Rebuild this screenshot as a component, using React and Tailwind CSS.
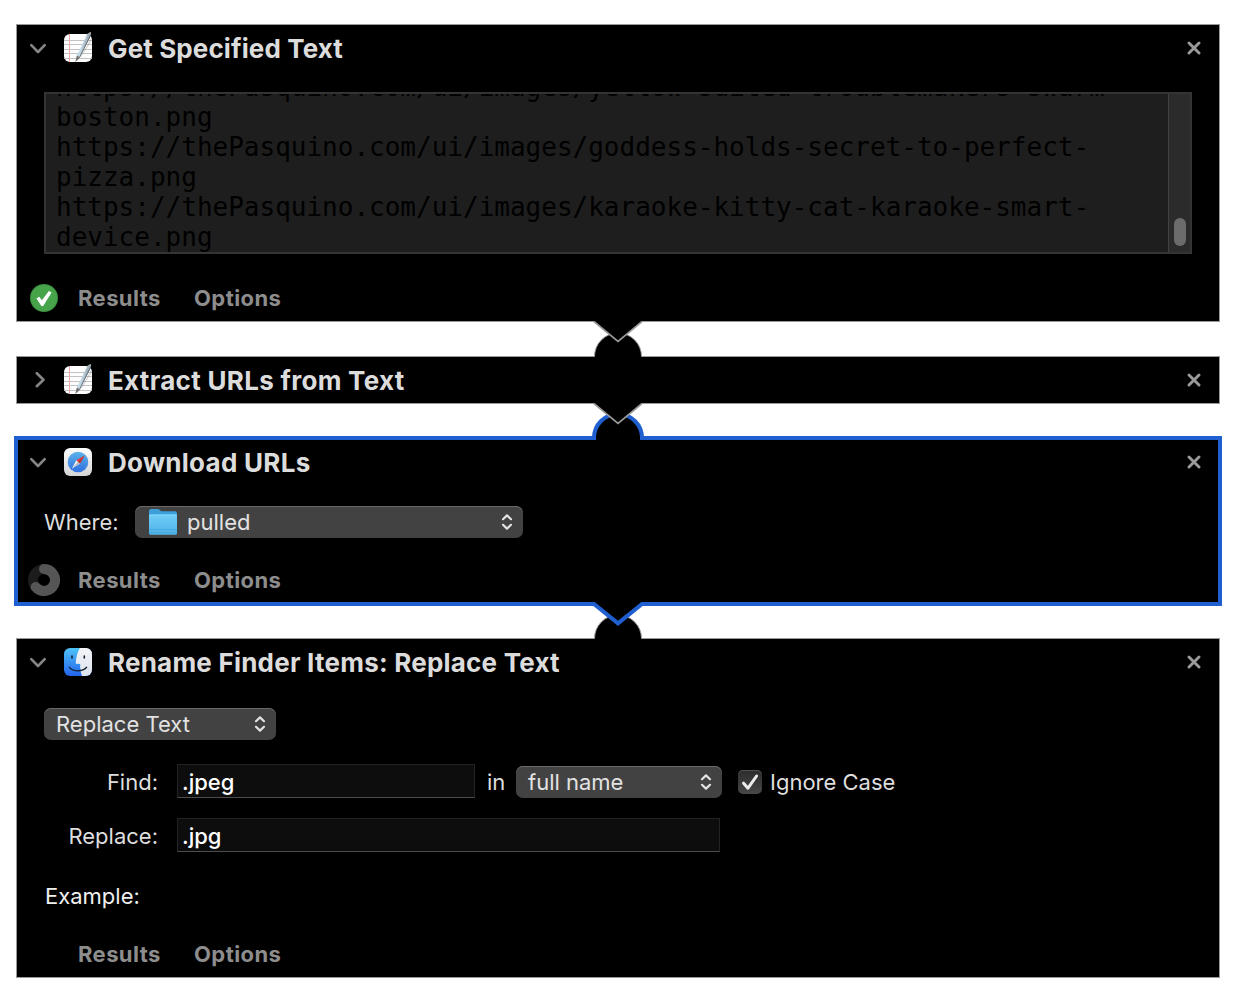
import React from 'react';

function ChevronDown() {
  return (
    <svg className="h-4 w-4 shrink-0" viewBox="0 0 16 16" fill="none" stroke="#868686" strokeWidth="2.6" strokeLinecap="round" strokeLinejoin="round">
      <path d="M1.3 5.2 L8 12 L14.7 5.2" />
    </svg>
  );
}

function ChevronRight() {
  return (
    <svg className="h-4 w-4 shrink-0" viewBox="0 0 16 16" fill="none" stroke="#868686" strokeWidth="2.6" strokeLinecap="round" strokeLinejoin="round">
      <path d="M6.8 1.2 L13.5 7.7 L6.8 14.2" />
    </svg>
  );
}

function CloseIcon() {
  return (
    <svg className="h-[14px] w-[14px]" viewBox="0 0 14 14" fill="none" stroke="#9a9a9a" strokeWidth="2.9" strokeLinecap="round">
      <path d="M2 2 L12 12 M12 2 L2 12" />
    </svg>
  );
}

function TextEditIcon() {
  return (
    <svg className="h-7 w-7 shrink-0 overflow-visible" viewBox="0 0 28 28">
      <defs>
        <linearGradient id="penBody" x1="0" y1="0" x2="1" y2="0.5">
          <stop offset="0" stopColor="#4f7fa6" />
          <stop offset="0.45" stopColor="#c9dfee" />
          <stop offset="1" stopColor="#6d7880" />
        </linearGradient>
      </defs>
      <rect width="28" height="28" rx="6" fill="#fdfdfd" />
      <path d="M0 6.5H28M0 10.5H28M0 15.5H28M0 19.5H28M0 24.5H28" stroke="#c3c3c3" strokeWidth="1" />
      <path d="M5.5 0V28" stroke="#f0a9a9" strokeWidth="1" />
      <path d="M15 25 L27.5 3 L27.5 7 L18 22 Z" fill="#000" opacity="0.12" />
      <path d="M23.6 -0.6 L27 -2 L26.8 1.8 L15.8 23 L12.6 27 L12.8 21.8 Z" fill="url(#penBody)" />
      <path d="M26.8 0.8 L15.7 23 L12.8 26.5" stroke="#56595c" strokeWidth="0.8" fill="none" />
      <path d="M12.8 21.8 L15.6 23 L11.2 28.6 Z" fill="#77726d" />
      <path d="M24 -0.8 L27 -2 L26.8 0.6 Z" fill="#a9a29a" />
    </svg>
  );
}

function SafariIcon() {
  return (
    <svg className="h-7 w-7 shrink-0" viewBox="0 0 28 28">
      <defs>
        <linearGradient id="safariTile" x1="0" y1="0" x2="0" y2="1">
          <stop offset="0" stopColor="#ffffff" />
          <stop offset="1" stopColor="#d4d4d6" />
        </linearGradient>
        <linearGradient id="safariDial" x1="0" y1="0" x2="0" y2="1">
          <stop offset="0" stopColor="#5cb3ea" />
          <stop offset="1" stopColor="#2d6fe0" />
        </linearGradient>
      </defs>
      <rect width="28" height="28" rx="6.2" fill="url(#safariTile)" />
      <circle cx="14" cy="14" r="10.3" fill="url(#safariDial)" />
      <circle cx="14" cy="14" r="8.9" fill="none" stroke="#9dcbf5" strokeWidth="0.9" strokeDasharray="0.5 0.9" opacity="0.4" />
      <path d="M20.6 7.6 L12.2 12.2 L15.8 15.8 Z" fill="#e8453c" />
      <path d="M20.6 7.6 L14 14 L15.8 15.8 Z" fill="#b5302f" />
      <path d="M8 20.4 L12.2 12.2 L15.8 15.8 Z" fill="#f3f3f5" />
      <path d="M8 20.4 L14 14 L15.8 15.8 Z" fill="#b4bac4" />
    </svg>
  );
}

function FinderIcon() {
  return (
    <svg className="h-7 w-7 shrink-0" viewBox="0 0 28 28">
      <defs>
        <linearGradient id="finderLeft" x1="0" y1="0" x2="0" y2="1">
          <stop offset="0" stopColor="#4fc3f7" />
          <stop offset="1" stopColor="#2363ee" />
        </linearGradient>
        <linearGradient id="finderRight" x1="0" y1="0" x2="0" y2="1">
          <stop offset="0" stopColor="#f4f4f6" />
          <stop offset="1" stopColor="#dbe3f0" />
        </linearGradient>
        <clipPath id="finderTile">
          <rect width="28" height="28" rx="6.2" />
        </clipPath>
      </defs>
      <g clipPath="url(#finderTile)">
        <rect width="28" height="28" fill="url(#finderLeft)" />
        <path d="M16 0 C13.4 4 11.9 9.5 11.8 15.8 L16.2 16 C15.9 20 16.6 24.5 18 28 L28 28 L28 0 Z" fill="url(#finderRight)" />
      </g>
      <path d="M5.4 19.3 C9.4 24 18.5 24 22.6 19.3" stroke="#14202e" strokeWidth="1.3" fill="none" strokeLinecap="round" />
      <path d="M8 8 V10 M20.3 8 V10" stroke="#14202e" strokeWidth="1.6" strokeLinecap="round" />
    </svg>
  );
}

function FolderIcon() {
  return (
    <svg className="h-7 w-[30px] shrink-0" viewBox="0 0 30 28">
      <defs>
        <linearGradient id="folderFront" x1="0" y1="0" x2="0" y2="1">
          <stop offset="0" stopColor="#72cdf8" />
          <stop offset="1" stopColor="#4fb2e8" />
        </linearGradient>
      </defs>
      <path d="M1 3 Q1 1 3 1 H9.5 Q10.6 1 11.5 1.8 L12.5 2.7 Q13.2 3.3 14.4 3.3 H27 Q29 3.3 29 5.2 V24 H1 Z" fill="#3d9fd8" />
      <path d="M1 6.9 Q1 6.5 2 6.5 H28 Q29 6.5 29 6.9 V25.2 Q29 26.8 27.4 26.8 H2.6 Q1 26.8 1 25.2 Z" fill="url(#folderFront)" />
      <path d="M1.5 6.9 H28.5" stroke="#93dcfb" strokeWidth="0.7" />
      <path d="M1 21.6 H29 M1 24.6 H29" stroke="#3d9cd2" strokeWidth="0.6" />
    </svg>
  );
}

function SuccessIcon() {
  return (
    <svg className="h-7 w-7" viewBox="0 0 28 28">
      <circle cx="14" cy="14" r="14" fill="#3c8f3f" />
      <circle cx="14" cy="14" r="13" fill="#48a44b" />
      <path d="M6.4 14.4 L9.2 12.8 L12 16.2 L18.8 7 L21.6 8.4 L13.2 22 L11.4 22 Z" fill="#fff" />
    </svg>
  );
}

function ProgressIcon() {
  return (
    <svg className="h-8 w-8" viewBox="0 0 32 32" fill="none">
      <circle cx="16" cy="16" r="11" stroke="#1c1c1c" strokeWidth="10" />
      <path d="M16 5 A11 11 0 1 1 7.6 23.1" stroke="#555555" strokeWidth="10" strokeLinecap="round" />
    </svg>
  );
}

/* Semicircular socket that receives the arrow of the step above. */
function Socket({ active }) {
  return active ? (
    <svg className="absolute -top-[32px] left-[572px] h-[32px] w-[56px]" viewBox="0 0 56 32">
      <path d="M4 32 V30 A24 24 0 0 1 52 30 V32" fill="#000" stroke="#1f5fcf" strokeWidth="4" />
      <path d="M6 28 H50 V32 H6 Z" fill="#000" />
    </svg>
  ) : (
    <svg className="absolute -top-[27px] left-[573px] h-[27px] w-[56px]" viewBox="0 0 56 27">
      <path d="M4.5 28 V26.5 A23.5 23.5 0 0 1 51.5 26.5 V28" fill="#000" stroke="#999" strokeWidth="1" />
    </svg>
  );
}

/* Arrow pointing into the step below. */
function Arrow({ active }) {
  return active ? (
    <svg className="absolute -bottom-[30px] left-[572px] z-10 h-[30px] w-[56px]" viewBox="0 0 56 30">
      <path d="M4 0 H52 V2 L28 21.4 L4 2 Z" fill="#000" />
      <path d="M2 2 H4 L28 21.4 L52 2 H54" fill="none" stroke="#1f5fcf" strokeWidth="4" />
    </svg>
  ) : (
    <svg className="absolute -bottom-[25px] left-[573px] z-10 h-[25px] w-[56px]" viewBox="0 0 56 25">
      <path d="M4 0 V0.5 L28 20.4 L52 0.5 V0 Z" fill="#000" />
      <path d="M4 0.5 L28 20.4 L52 0.5" fill="none" stroke="#999" strokeWidth="1.7" />
    </svg>
  );
}

function Step({ title, titleClass, icon, className, active, collapsed, first, last, children }) {
  return (
    <section className={(active ? '-mx-[2px] border-4 border-[#1f5fcf] ' : 'border border-[#999] ') + 'relative bg-black ' + className}>
      {!first && <Socket active={active} />}
      <header className={active ? 'flex h-[44px] items-center pr-[17px] pl-3' : 'flex h-[46px] items-center pr-[18px] pl-[13px]'}>
        {collapsed ? <ChevronRight /> : <ChevronDown />}
        <div className="ml-[18px]">{icon}</div>
        <h2 className={'ml-4 flex-1 pt-px text-[26px] leading-8 font-bold whitespace-nowrap text-[#dcdcdc] ' + titleClass}>{title}</h2>
        <button aria-label="Remove step"><CloseIcon /></button>
      </header>
      {children}
      {!last && <Arrow active={active} />}
    </section>
  );
}

function Footer({ status, className }) {
  return (
    <footer className={'flex h-8 items-center text-[22px] font-bold tracking-[0.42px] text-[#8d8d8d] ' + className}>
      <div className="flex w-8 justify-center">{status}</div>
      <button className="ml-[18px] w-[83px] text-left">Results</button>
      <button className="ml-[33px]">Options</button>
    </footer>
  );
}

function Popup({ className, children }) {
  return (
    <button className={'flex h-8 items-center rounded-[7px] bg-[#424242] pr-[10px] text-left text-[#e2e2e2] shadow-[inset_0_1px_0_#6a6a6a] ' + className}>
      <span className="flex flex-1 items-center">{children}</span>
      <svg className="h-4 w-3" viewBox="0 0 12 16" fill="none" stroke="#e2e2e2" strokeWidth="2.2" strokeLinecap="round" strokeLinejoin="round">
        <path d="M2 5.2 L6 1.4 L10 5.2 M2 10.8 L6 14.6 L10 10.8" />
      </svg>
    </button>
  );
}

function Field({ value, className }) {
  return (
    <div className={'flex h-[34px] items-center border border-[#232323] border-b-[#4c4c4c] bg-[#0d0d0d] pt-px pl-1 font-medium text-white ' + className}>{value}</div>
  );
}

const lines = [
  'https://thePasquino.com/ui/images/yellow-suited-troublemakers-swarm-',
  'boston.png',
  'https://thePasquino.com/ui/images/goddess-holds-secret-to-perfect-',
  'pizza.png',
  'https://thePasquino.com/ui/images/karaoke-kitty-cat-karaoke-smart-',
  'device.png',
];

export default function App() {
  return (
    <main className="flex h-[1002px] w-[1236px] flex-col bg-white px-4 pt-6 font-['Inter',sans-serif] text-[22px] leading-7 text-[#dedede]">
      <Step first title="Get Specified Text" titleClass="tracking-[0.12px]" icon={<TextEditIcon />} className="h-[298px]">
        <div className="mt-[21px] ml-[27px] flex h-[162px] w-[1148px] overflow-hidden border-2 border-[#343434] bg-[#1e1e1e]">
          <div className="-mt-[22px] flex-1 pl-[10px] font-['DejaVu_Sans_Mono',monospace] text-[26px] leading-[30px] whitespace-pre text-black">
            {lines.map((line) => (
              <div key={line}>{line}</div>
            ))}
          </div>
          <div className="flex w-[22px] items-end justify-center border-l border-[#424242] bg-[#2b2b2b] pb-[6px]">
            <div className="h-7 w-3 rounded-full bg-[#6c6c6c]" />
          </div>
        </div>
        <Footer className="mt-7 ml-[11px]" status={<SuccessIcon />} />
      </Step>

      <Step collapsed title="Extract URLs from Text" titleClass="tracking-[0.3px]" icon={<TextEditIcon />} className="mt-[34px] h-[48px]" />

      <Step active title="Download URLs" titleClass="tracking-[0.28px]" icon={<SafariIcon />} className="mt-8 h-[170px]">
        <div className="mt-[22px] flex h-8 items-center pl-[26px]">
          <span className="w-[91px]">Where:</span>
          <Popup className="w-[388px] pl-[13px]">
            <FolderIcon />
            <span className="ml-[9px]">pulled</span>
          </Popup>
        </div>
        <Footer className="mt-[26px] ml-[10px]" status={<ProgressIcon />} />
      </Step>

      <Step last title="Rename Finder Items: Replace Text" titleClass="tracking-[0.22px]" icon={<FinderIcon />} className="mt-8 h-[340px]">
        <div className="mt-[23px] ml-[27px]">
          <Popup className="w-[232px] pl-3">Replace Text</Popup>
          <div className="mt-6 flex h-[34px] items-center">
            <span className="w-[114px] pt-[2px] text-right">Find:</span>
            <Field className="ml-[19px] w-[298px]" value=".jpeg" />
            <span className="ml-3 w-[29px] pt-[2px]">in</span>
            <Popup className="mt-[2px] w-[206px] pl-3">full name</Popup>
            <div className="mt-[2px] ml-4 flex h-6 w-6 items-center justify-center rounded-[5px] bg-gradient-to-b from-[#2c2c2c] to-[#484848] shadow-[inset_0_1px_0_#505050]">
              <svg className="h-5 w-5" viewBox="0 0 20 20" fill="none" stroke="#ececec" strokeWidth="3" strokeLinecap="round" strokeLinejoin="round">
                <path d="M3.6 11.2 L8 16.2 L16.6 4" />
              </svg>
            </div>
            <span className="ml-2 pt-[2px]">Ignore Case</span>
          </div>
          <div className="mt-5 flex h-[34px] items-center">
            <span className="w-[114px] pt-[2px] text-right">Replace:</span>
            <Field className="ml-[19px] w-[543px]" value=".jpg" />
          </div>
          <div className="mt-[30px] pl-px text-[#f0f0f0]">Example:</div>
        </div>
        <Footer className="mt-7 ml-[11px]" />
      </Step>
    </main>
  );
}
